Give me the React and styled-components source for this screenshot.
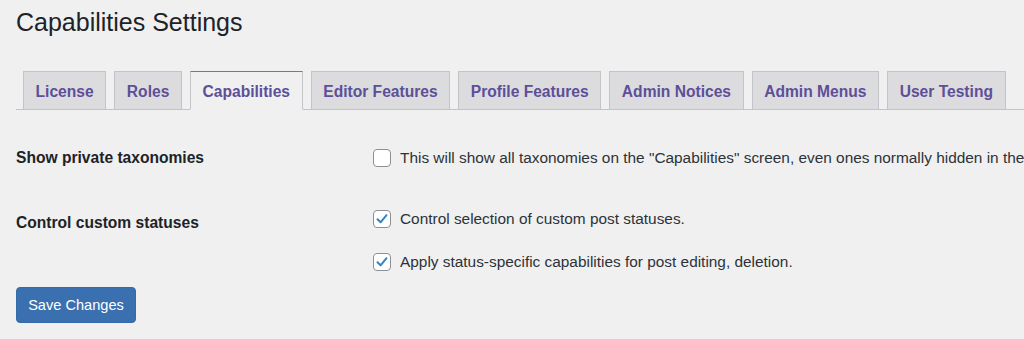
import React from "react";
import styled, { createGlobalStyle } from "styled-components";

const GlobalStyle = createGlobalStyle`
  html, body {
    margin: 0;
    padding: 0;
    background: #f0f0f1;
    overflow: hidden;
  }
  body {
    font-family: "Liberation Sans", Arial, sans-serif;
    color: #1d2327;
  }
`;

const Wrap = styled.div`
  padding-left: 16px;
  width: 1008px;
  height: 339px;
  overflow: hidden;
`;

const Title = styled.h1`
  margin: 0;
  padding-top: 7px;
  font-size: 25px;
  font-weight: 400;
  line-height: 30px;
  color: #1d2327;
`;

const TabBar = styled.nav`
  display: flex;
  margin-top: 34px;
  padding-left: 7px;
  border-bottom: 1px solid #c3c4c7;
`;

const Tab = styled.a`
  display: block;
  box-sizing: border-box;
  height: 39px;
  margin-right: 8px;
  margin-bottom: -1px;
  padding: 0 11.6px;
  line-height: 39px;
  font-size: 15.6px;
  font-weight: 700;
  color: #5d4f99;
  text-decoration: none;
  white-space: nowrap;
  background: ${(p) => (p.active ? "#f0f0f1" : "#dcdcde")};
  border: 1px solid #c3c4c7;
  border-top-color: ${(p) => (p.active ? "#7b70ad" : "#c3c4c7")};
  border-bottom-color: ${(p) => (p.active ? "#f0f0f1" : "#c3c4c7")};
`;

const Form = styled.div`
  padding-top: 38px;
`;

const Row = styled.div`
  display: grid;
  grid-template-columns: 357px 1fr;
  margin-bottom: ${(p) => p.gap}px;
`;

const Label = styled.div`
  font-size: 15.6px;
  font-weight: 700;
  line-height: 20px;
  padding-top: ${(p) => p.offset || 0}px;
  color: #1d2327;
`;

const Options = styled.div`
  display: flex;
  flex-direction: column;
  gap: 23px;
`;

const Option = styled.label`
  display: flex;
  align-items: center;
  gap: 9px;
  font-size: 15.4px;
  line-height: 20px;
  color: #2c3338;
  white-space: nowrap;
`;

const Box = styled.span`
  box-sizing: border-box;
  flex: none;
  width: 18px;
  height: 18px;
  border: 1px solid #8c8f94;
  border-radius: 4px;
  background: #fff;
  display: flex;
  align-items: center;
  justify-content: center;
`;

const SaveButton = styled.button`
  box-sizing: border-box;
  width: 120px;
  height: 36px;
  margin-top: 15px;
  border: 1px solid #336aa8;
  border-radius: 4px;
  background: #3a70b0;
  color: #fff;
  font-family: inherit;
  font-size: 14.6px;
  cursor: pointer;
`;

const Check = ({ checked }) => (
  <Box>
    {checked && (
      <svg width="14" height="14" viewBox="0 0 14 14">
        <path
          d="M2.5 7.2 L5.6 10.3 L11.5 3.2"
          fill="none"
          stroke="#3582c4"
          strokeWidth="2"
          strokeLinecap="round"
          strokeLinejoin="round"
        />
      </svg>
    )}
  </Box>
);

const tabs = [
  "License",
  "Roles",
  "Capabilities",
  "Editor Features",
  "Profile Features",
  "Admin Notices",
  "Admin Menus",
  "User Testing",
];

const App = () => (
  <>
    <GlobalStyle />
    <Wrap>
      <Title>Capabilities Settings</Title>
      <TabBar>
        {tabs.map((t) => (
          <Tab key={t} href="#" active={t === "Capabilities" ? 1 : 0}>
            {t}
          </Tab>
        ))}
      </TabBar>
      <Form>
        <Row gap={41}>
          <Label>Show private taxonomies</Label>
          <Option>
            <Check />
            This will show all taxonomies on the "Capabilities" screen, even ones normally hidden in the
          </Option>
        </Row>
        <Row gap={0}>
          <Label offset={4}>Control custom statuses</Label>
          <Options>
            <Option>
              <Check checked />
              Control selection of custom post statuses.
            </Option>
            <Option>
              <Check checked />
              Apply status-specific capabilities for post editing, deletion.
            </Option>
          </Options>
        </Row>
        <SaveButton>Save Changes</SaveButton>
      </Form>
    </Wrap>
  </>
);

export default App;
